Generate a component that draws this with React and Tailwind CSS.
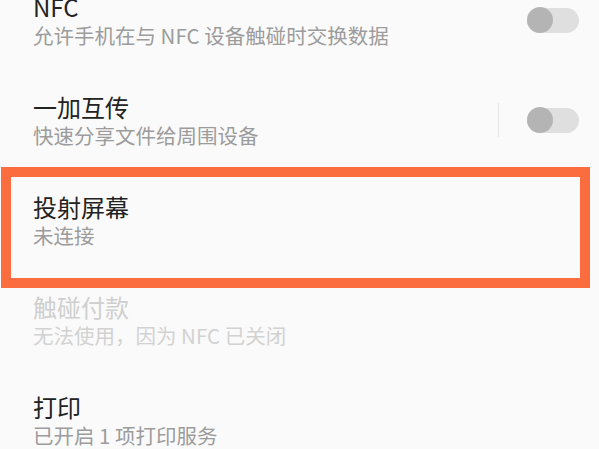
import React from "react";

const rows = [
  { title: "NFC", sub: "允许手机在与 NFC 设备触碰时交换数据", toggle: true },
  { title: "一加互传", sub: "快速分享文件给周围设备", toggle: true, divider: true },
  { title: "投射屏幕", sub: "未连接" },
  { title: "触碰付款", sub: "无法使用，因为 NFC 已关闭", disabled: true },
  { title: "打印", sub: "已开启 1 项打印服务" },
];

function Toggle() {
  return (
    <div className="relative w-[52px] h-[25px] rounded-full bg-[#dfdfdf]">
      <div className="absolute left-0 top-[-0.5px] w-[26px] h-[26px] rounded-full bg-[#b4b4b4]" />
    </div>
  );
}

export default function App() {
  return (
    <div
      className="relative w-[599px] h-[449px] overflow-hidden bg-[#fafafa]"
      style={{ fontFamily: '"Noto Sans CJK SC", "Noto Sans", sans-serif' }}>
      <div className="-mt-[30px]">
        {rows.map((row) => (
          <div key={row.title} className="h-[100px] flex items-center pl-[33px] pr-[20px]">
            <div className="flex-1">
              <div
                className={`text-[24px] leading-[30px] ${
                  row.disabled ? "text-[#cfcfcf]" : "text-[#222222]"
                }`}>
                {row.title}
              </div>
              <div
                className={`text-[20.5px] leading-[27px] ${
                  row.disabled ? "text-[#d2d2d2]" : "text-[#9c9c9c]"
                }`}>
                {row.sub}
              </div>
            </div>
            {row.divider && <div className="w-px h-[34px] bg-[#e6e6e6] mr-[28px]" />}
            {row.toggle && <Toggle />}
          </div>
        ))}
      </div>

      {/* annotation box */}
      <div className="absolute left-[1px] top-[167px] w-[589px] h-[121px] border-[10px] border-[#fb6c3e]" />
    </div>
  );
}
